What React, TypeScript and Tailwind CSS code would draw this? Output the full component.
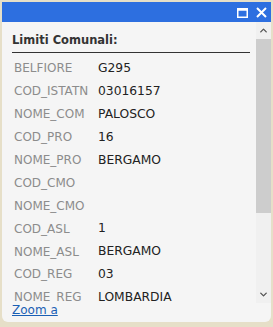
import { ChevronDown, ChevronUp } from "lucide-react";

const ROWS: [string, string][] = [
  ["BELFIORE", "G295"],
  ["COD_ISTATN", "03016157"],
  ["NOME_COM", "PALOSCO"],
  ["COD_PRO", "16"],
  ["NOME_PRO", "BERGAMO"],
  ["COD_CMO", ""],
  ["NOME_CMO", ""],
  ["COD_ASL", "1"],
  ["NOME_ASL", "BERGAMO"],
  ["COD_REG", "03"],
  ["NOME_REG", "LOMBARDIA"],
];

export default function App() {
  return (
    <div
      className="h-[327px] w-[273px] overflow-hidden bg-[#e6dfc8] p-[2px]"
      style={{ fontFamily: '"DejaVu Sans", Verdana, sans-serif' }}
    >
      <div className="flex h-[320px] w-[269px] flex-col overflow-hidden rounded-b-[6px] bg-[#f5f5f5]">
        <div className="flex h-[20px] shrink-0 items-center justify-end gap-[8px] bg-[#2d6fe0] pr-[4px]">
          <svg width="11" height="10" viewBox="0 0 11 10" className="mt-[1px]">
            <rect x="0.75" y="0.75" width="9.5" height="8.5" fill="none" stroke="white" strokeWidth="1.5" />
            <rect x="0.75" y="0.75" width="9.5" height="2" fill="white" />
          </svg>
          <svg width="11" height="11" viewBox="0 0 11 11">
            <path d="M1 1L10 10M10 1L1 10" stroke="white" strokeWidth="2" />
          </svg>
        </div>
        <div className="flex h-[281px] shrink-0">
          <div className="flex-1 overflow-hidden pl-[10px] pr-[6px] pt-[10px]">
            <div className="border-b-[1.5px] border-[#333] pb-[4px] text-[11.5px] font-bold leading-[16px] text-[#333]">
              Limiti Comunali:
            </div>
            <div className="pt-[4px]">
              {ROWS.map(([k, v]) => (
                <div key={k} className="flex h-[22.9px] items-center text-[12px]">
                  <span className="w-[86px] shrink-0 pl-[2px] text-[#8c8c8c]">{k}</span>
                  <span className="text-[12.3px] text-[#222]">{v}</span>
                </div>
              ))}
            </div>
          </div>
          <div className="flex w-[15px] shrink-0 flex-col bg-[#f0f0f0]">
            <div className="flex h-[17px] items-center justify-center text-[#555]">
              <ChevronUp size={11} strokeWidth={3} />
            </div>
            <div className="h-[174px] bg-[#cdcdcd]" />
            <div className="flex-1" />
            <div className="flex h-[17px] items-center justify-center text-[#555]">
              <ChevronDown size={11} strokeWidth={3} />
            </div>
          </div>
        </div>
        <div className="pl-[10px] text-[12px] leading-[15px]">
          <a href="#" className="text-[#1a5fb4] underline">
            Zoom a
          </a>
        </div>
      </div>
    </div>
  );
}
